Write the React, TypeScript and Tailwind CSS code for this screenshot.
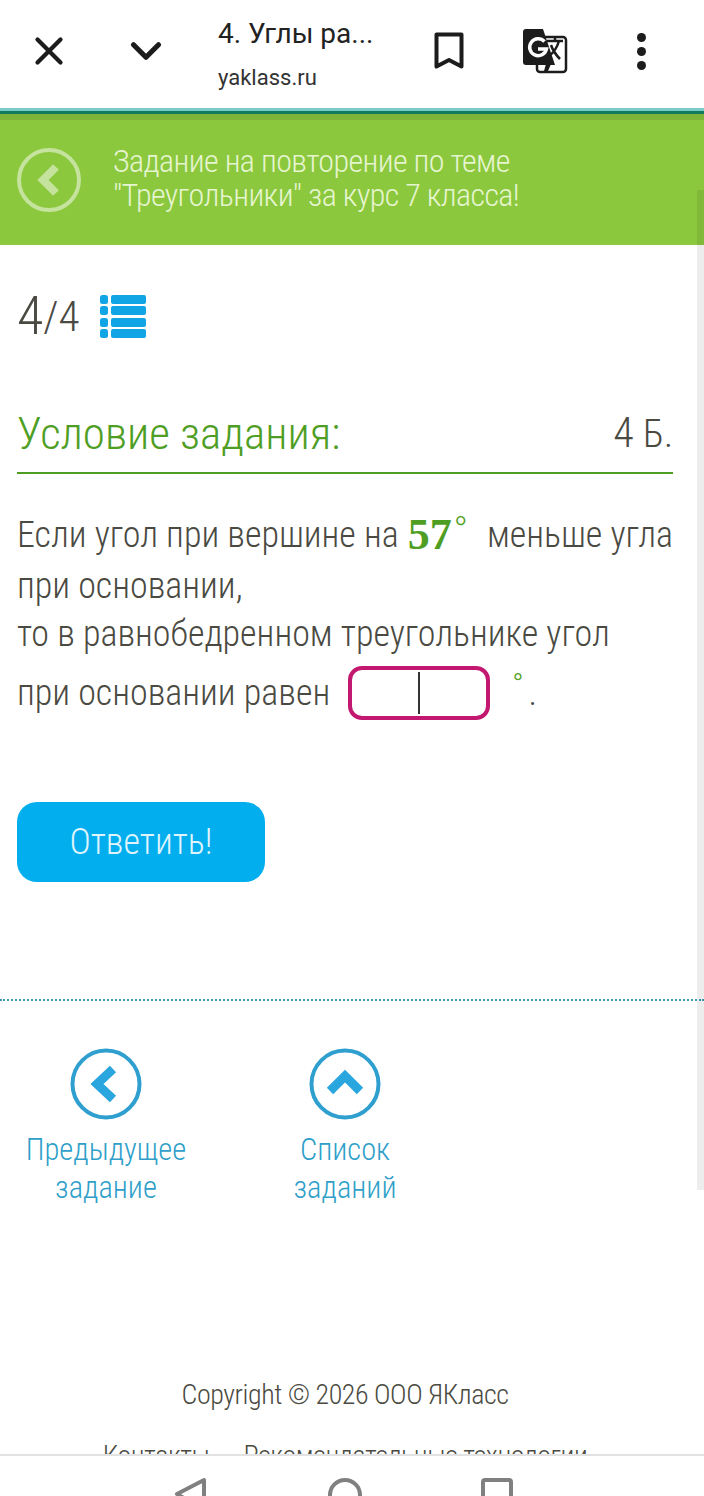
import { X, ChevronDown } from "lucide-react";

const roboto = "font-['Roboto','Noto_Sans',sans-serif]";

function TranslateIcon() {
  return (
    <svg width="46" height="46" viewBox="0 0 46 46">
      <rect x="15" y="9" width="29" height="35" rx="3" fill="#fff" stroke="#1c1c1c" strokeWidth="2.5" />
      <path d="M1 4a3 3 0 0 1 3-3h17l12 36H4a3 3 0 0 1-3-3z" fill="#1c1c1c" />
      <path d="M24 36l-2 7h4l3-7z" fill="#1c1c1c" />
      <path d="M22.500 13.500a8.500 8.500 0 1 0 2 7.500h-8.500" fill="none" stroke="#fff" strokeWidth="3.500" />
      <path d="M25 13h16M33 9v4M37 13c-2 7-6 12-10 15M29 17c2 6 5 10 9 14" fill="none" stroke="#1c1c1c" strokeWidth="2.500" />
    </svg>
  );
}

function ListIcon() {
  return (
    <svg width="46" height="43" viewBox="0 0 46 43" fill="#12a5e6">
      <rect x="0" y="0" width="8" height="9" rx="2.500" />
      <rect x="11" y="0" width="35" height="9" rx="2" />
      <rect x="0" y="11" width="8" height="9" rx="2.500" />
      <rect x="11" y="11" width="35" height="9" rx="2" />
      <rect x="0" y="23" width="8" height="9" rx="2.500" />
      <rect x="11" y="23" width="35" height="9" rx="2" />
      <rect x="0" y="34" width="8" height="9" rx="2.500" />
      <rect x="11" y="34" width="35" height="9" rx="2" />
    </svg>
  );
}

function NavLink({ direction, lines }: { direction: "left" | "up"; lines: string[] }) {
  return (
    <div className="flex w-[178px] flex-col items-center">
      <svg width="72" height="72" viewBox="0 0 72 72">
        <circle cx="36" cy="36" r="33.500" fill="none" stroke="#2f9fcf" strokeWidth="4" />
        {direction === "left" ? (
          <path d="M43 21L27 36l16 15" fill="none" stroke="#2aa6de" strokeWidth="9" />
        ) : (
          <path d="M21 43l15-15 15 15" fill="none" stroke="#2aa6de" strokeWidth="9" />
        )}
      </svg>
      <div className="mt-[11px] text-center text-[30.5px] leading-[38px] font-light text-[#2f9fc9] [font-stretch:75%]">
        {lines.map((line) => (
          <div key={line}>{line}</div>
        ))}
      </div>
    </div>
  );
}

export default function App() {
  return (
    <div className={`relative flex h-[1496px] w-[704px] flex-col overflow-hidden bg-white ${roboto}`}>
      {/* browser bar */}
      <header className="flex h-[108px] shrink-0 items-center pb-[6px]">
        <X size={46} strokeWidth={2.2} className="ml-[26px] text-[#1c1c1c]" />
        <ChevronDown size={50} strokeWidth={2.5} className="ml-[49px] text-[#1c1c1c]" />
        <div className="ml-[47px] w-[190px] pt-[6px]">
          <div className="text-[28px] leading-[38px] text-[#222]">4. Углы ра...</div>
          <div className="mt-[10px] text-[22px] leading-[30px] text-[#333]">yaklass.ru</div>
        </div>
        <svg width="30" height="38" viewBox="0 0 30 38" className="ml-[26px]">
          <path d="M2.500 2.500h25v32L15 28 2.500 34.500z" fill="none" stroke="#1c1c1c" strokeWidth="4" strokeLinejoin="round" />
        </svg>
        <div className="ml-[58px]">
          <TranslateIcon />
        </div>
        <div className="ml-[69px] flex flex-col gap-[5px]">
          <span className="size-[9px] rounded-full bg-[#1c1c1c]" />
          <span className="size-[9px] rounded-full bg-[#1c1c1c]" />
          <span className="size-[9px] rounded-full bg-[#1c1c1c]" />
        </div>
      </header>
      <div className="h-[3px] shrink-0 bg-[#7cc9c9]" />
      <div className="h-[3px] shrink-0 bg-[#0f7a5c]" />

      {/* green banner */}
      <div className="flex h-[131px] shrink-0 items-center border-t-[6px] border-[#7fb43a] bg-[#8bc83e] pb-[5px]">
        <svg width="64" height="64" viewBox="0 0 64 64" className="ml-[17px] shrink-0">
          <circle cx="32" cy="32" r="30" fill="none" stroke="#c5e39c" strokeWidth="4" />
          <path d="M39 19L26 32l13 13" fill="none" stroke="#c5e39c" strokeWidth="8" />
        </svg>
        <div className="mb-[4px] ml-[32px] text-[32px] leading-[34px] font-light tracking-[-0.6px] text-[#e6f5d0] [font-stretch:75%]">
          <div>Задание на повторение по теме</div>
          <div>"Треугольники" за курс 7 класса!</div>
        </div>
      </div>

      {/* task */}
      <main className="flex-1 overflow-hidden pl-[17px] pr-[31px] text-[#4a4a42]">
        <div className="mt-[48px] flex h-[46px] items-center">
          <span className="text-[54px] leading-[46px] font-light [font-stretch:75%]">4</span>
          <span className="text-[43px] leading-[46px] font-light [font-stretch:75%]">/4</span>
          <span className="ml-[21px]">
            <ListIcon />
          </span>
        </div>

        <div className="mt-[69px] flex items-end justify-between border-b-2 border-[#4f9e24] pb-[13px]">
          <span className="text-[45px] leading-[50px] font-light text-[#4f9e24] [font-stretch:75%]">Условие задания:</span>
          <span className="text-[42px] leading-[50px] font-light [font-stretch:75%]">
            4 <span className="text-[38px]">Б.</span>
          </span>
        </div>

        <div className="mt-[37px] text-[36px] leading-[49px] font-light [font-stretch:75%]">
          <div className="flex h-[49px] items-center justify-between">
            <span className="flex items-center">
              Если угол при вершине на
              <span className="mb-[3px] ml-[9px] font-['Liberation_Serif',serif] text-[44px] font-bold text-[#4f9e24] [font-stretch:100%]">57</span>
              <span className="mb-[20px] ml-[3px] font-['Liberation_Serif',serif] text-[30px] text-[#4f9e24]">°</span>
            </span>
            <span>меньше угла</span>
          </div>
          <div className="mt-[2px]">при основании,</div>
          <div className="-mt-[1px]">то в равнобедренном треугольнике угол</div>
          <div className="mt-[7px] flex items-center">
            <span>при основании равен</span>
            <span className="ml-[18px] flex h-[54px] w-[142px] items-center justify-center rounded-[14px] border-4 border-[#c2186f]">
              <span className="h-[42px] w-[2px] bg-[#333]" />
            </span>
            <span className="mb-[18px] ml-[22px] text-[30px] leading-none text-[#4f9e24]">°</span>
            <span className="ml-[5px]">.</span>
          </div>
        </div>

        <button className="mt-[82px] flex h-[80px] w-[248px] items-center justify-center rounded-[20px] bg-[#03aeef] text-[36px] font-light text-[#dff4fd] [font-stretch:75%]">
          Ответить!
        </button>

        <div className="-ml-[17px] -mr-[31px] mt-[117px] border-t-2 border-dotted border-[#3f9fb8]" />

        <div className="mt-[47px] flex gap-[61px]">
          <NavLink direction="left" lines={["Предыдущее", "задание"]} />
          <NavLink direction="up" lines={["Список", "заданий"]} />
        </div>

        <div className="mt-[170px] text-center text-[28px] leading-[36px] font-light tracking-[-0.45px] [font-stretch:75%]">
          Copyright © 2026 ООО ЯКласс
        </div>
        <div className="mt-[25px] flex justify-center gap-[34px] text-[28px] leading-[36px] font-light tracking-[-0.45px] [font-stretch:75%]">
          <span>Контакты</span>
          <span>Рекомендательные технологии</span>
        </div>
      </main>

      {/* android nav */}
      <nav className="relative flex h-[42px] shrink-0 overflow-hidden border-t-2 border-[#e2e2e2] bg-white">
        <svg width="704" height="42" viewBox="0 0 704 42" fill="none" stroke="#808080" strokeWidth="4" strokeLinejoin="round">
          <path d="M204 24v30L177 38z" />
          <circle cx="345" cy="39" r="15" />
          <rect x="483" y="24" width="28" height="40" rx="2" />
        </svg>
      </nav>

      {/* overlay scrollbar */}
      <div className="absolute right-0 top-[190px] h-[1000px] w-[7px] bg-black/[0.07]" />
    </div>
  );
}
